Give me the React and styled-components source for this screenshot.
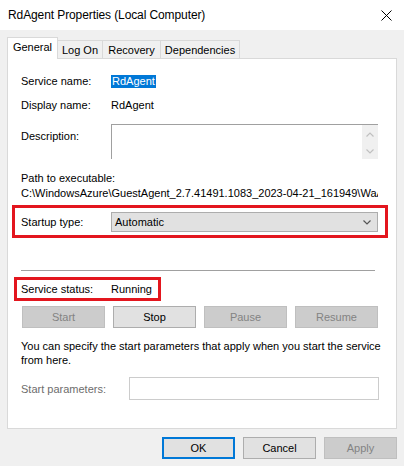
import React from "react";
import styled, { createGlobalStyle } from "styled-components";

const FONT = '"Liberation Sans", Arial, sans-serif';

const Global = createGlobalStyle`
  html, body { margin: 0; padding: 0; background: #f0f0f0; }
  body { font-family: ${FONT}; font-size: 11px; color: #000; }
  * { box-sizing: border-box; }
`;

const Window = styled.div`
  width: 404px;
  height: 466px;
  background: #f0f0f0;
  display: flex;
  flex-direction: column;
  overflow: hidden;
`;

const TitleBar = styled.div`
  height: 30px;
  background: #fff;
  display: flex;
  align-items: center;
  justify-content: space-between;
  padding: 0 12px 0 8px;
`;

const Title = styled.div`
  font-size: 12px;
  letter-spacing: -0.1px;
  color: #000;
`;

const Body = styled.div`
  padding: 7px 7px 0;
  display: flex;
  flex-direction: column;
`;

const TabStrip = styled.div`
  display: flex;
  align-items: flex-end;
  height: 21px;
  position: relative;
  z-index: 1;
`;

const Tab = styled.div`
  width: ${(p) => p.$w}px;
  height: ${(p) => (p.$active ? 22 : 18)}px;
  margin-bottom: ${(p) => (p.$active ? -1 : 0)}px;
  background: ${(p) => (p.$active ? "#fff" : "#f0f0f0")};
  border: 1px solid #d9d9d9;
  border-bottom: none;
  border-left: ${(p) => (p.$noLeft ? "none" : "1px solid #d9d9d9")};
  display: flex;
  align-items: ${(p) => (p.$active ? "flex-start" : "center")};
  padding-top: ${(p) => (p.$active ? 3 : 0)}px;
  justify-content: center;
  font-size: 11px;
`;

const Panel = styled.div`
  height: 371px;
  background: #fff;
  border: 1px solid #d9d9d9;
  padding: 0 13px;
  display: flex;
  flex-direction: column;
`;

const FieldRow = styled.div`
  display: flex;
  align-items: ${(p) => (p.$top ? "flex-start" : "center")};
  height: ${(p) => p.$h || 20}px;
  margin-top: ${(p) => p.$mt || 0}px;
`;

const Label = styled.div`
  width: ${(p) => p.$w || 90}px;
  flex: none;
  line-height: 14px;
  padding-top: ${(p) => p.$pt || 0}px;
  color: ${(p) => (p.$disabled ? "#6d6d6d" : "#000")};
`;

const Value = styled.div`
  line-height: 14px;
`;

const Selected = styled.span`
  background: #0078d7;
  color: #fff;
  padding: 0 1px 1px;
  line-height: 14px;
`;

const DescBox = styled.div`
  flex: 1;
  height: 35px;
  margin-right: 5px;
  border-top: 1px solid #a0a0a0;
  border-left: 1px solid #a0a0a0;
  display: flex;
  justify-content: flex-end;
`;

const ScrollBar = styled.div`
  width: 16px;
  background: #f0f0f0;
  display: flex;
  flex-direction: column;
  align-items: center;
  justify-content: space-between;
  padding: 7px 0 5px;
`;

const Text = styled.div`
  line-height: 14px;
  margin-top: ${(p) => p.$mt || 0}px;
  white-space: nowrap;
  overflow: hidden;
`;

const RedBox = styled.div`
  border: 3px solid #e3161e;
  margin-top: ${(p) => p.$mt}px;
  margin-left: ${(p) => p.$ml}px;
  margin-right: ${(p) => p.$mr || 0}px;
  width: ${(p) => (p.$w ? `${p.$w}px` : "auto")};
  padding: ${(p) => p.$pad};
  display: flex;
  align-items: center;
`;

const Select = styled.div`
  flex: 1;
  height: 20px;
  background: #e1e1e1;
  border: 1px solid #adadad;
  display: flex;
  align-items: center;
  justify-content: space-between;
  padding: 0 6px 0 3px;
`;

const Separator = styled.div`
  height: 1px;
  background: #a0a0a0;
  margin-top: 32px;
  margin-right: 8px;
`;

const ButtonRow = styled.div`
  display: grid;
  grid-template-columns: repeat(4, 1fr);
  column-gap: 8px;
  margin: 5px 5px 0 1px;
`;

const Button = styled.div`
  height: 22px;
  width: ${(p) => (p.$w ? `${p.$w}px` : "auto")};
  display: flex;
  align-items: center;
  justify-content: center;
  background: ${(p) => (p.$disabled ? "#cccccc" : "#e1e1e1")};
  border: ${(p) =>
    p.$default ? "2px solid #0078d7" : p.$disabled ? "1px solid #bfbfbf" : "1px solid #adadad"};
  color: ${(p) => (p.$disabled ? "#838383" : "#000")};
  font-size: 11px;
`;

const Para = styled.div`
  line-height: 14px;
  margin-top: 11px;
`;

const Input = styled.div`
  flex: 1;
  height: 23px;
  margin-right: 4px;
  border: 1px solid #cccccc;
  background: #fff;
`;

const Footer = styled.div`
  display: flex;
  justify-content: flex-end;
  gap: 8px;
  padding: 8px 7px 0;
`;

const Chevron = ({ up, color = "#c0c0c0" }) => (
  <svg width="8" height="5" viewBox="0 0 8 5">
    <polyline
      points={up ? "0.5,4.5 4,1 7.5,4.5" : "0.5,0.5 4,4 7.5,0.5"}
      fill="none"
      stroke={color}
      strokeWidth="1.2"
    />
  </svg>
);

export default function App() {
  return (
    <>
      <Global />
      <Window>
        <TitleBar>
          <Title>RdAgent Properties (Local Computer)</Title>
          <svg width="11" height="11" viewBox="0 0 11 11">
            <path d="M0.5 0.5 L10.5 10.5 M10.5 0.5 L0.5 10.5" stroke="#000" strokeWidth="1" />
          </svg>
        </TitleBar>
        <Body>
          <TabStrip>
            <Tab $w={51} $active>General</Tab>
            <Tab $w={45} $noLeft>Log On</Tab>
            <Tab $w={58} $noLeft>Recovery</Tab>
            <Tab $w={79} $noLeft>Dependencies</Tab>
          </TabStrip>
          <Panel>
            <FieldRow $mt={12}>
              <Label>Service name:</Label>
              <Value>
                <Selected>RdAgent</Selected>
              </Value>
            </FieldRow>
            <FieldRow $mt={4}>
              <Label>Display name:</Label>
              <Value>RdAgent</Value>
            </FieldRow>
            <FieldRow $mt={9} $h={35} $top>
              <Label $pt={5}>Description:</Label>
              <DescBox>
                <ScrollBar>
                  <Chevron up />
                  <Chevron />
                </ScrollBar>
              </DescBox>
            </FieldRow>
            <Text $mt={12}>Path to executable:</Text>
            <Text $mt={1} style={{ marginRight: 5 }}>
              C:\WindowsAzure\GuestAgent_2.7.41491.1083_2023-04-21_161949\WaAppAgent.exe
            </Text>
            <RedBox $mt={5} $ml={-9} $mr={-5} $pad="4px 7px 3px 6px">
              <Label>Startup type:</Label>
              <Select>
                <span>Automatic</span>
                <Chevron color="#555" />
              </Select>
            </RedBox>
            <Separator />
            <RedBox $mt={6} $ml={-7} $w={147} $pad="2px 0 2px 4px">
              <Label>Service status:</Label>
              <Value>Running</Value>
            </RedBox>
            <ButtonRow>
              <Button $disabled>Start</Button>
              <Button>Stop</Button>
              <Button $disabled>Pause</Button>
              <Button $disabled>Resume</Button>
            </ButtonRow>
            <Para>
              You can specify the start parameters that apply when you start the service
              <br />
              from here.
            </Para>
            <FieldRow $mt={10} $h={23}>
              <Label $w={108} $disabled>Start parameters:</Label>
              <Input />
            </FieldRow>
          </Panel>
        </Body>
        <Footer>
          <Button $w={73} $default>OK</Button>
          <Button $w={73}>Cancel</Button>
          <Button $w={73} $disabled>Apply</Button>
        </Footer>
      </Window>
    </>
  );
}
